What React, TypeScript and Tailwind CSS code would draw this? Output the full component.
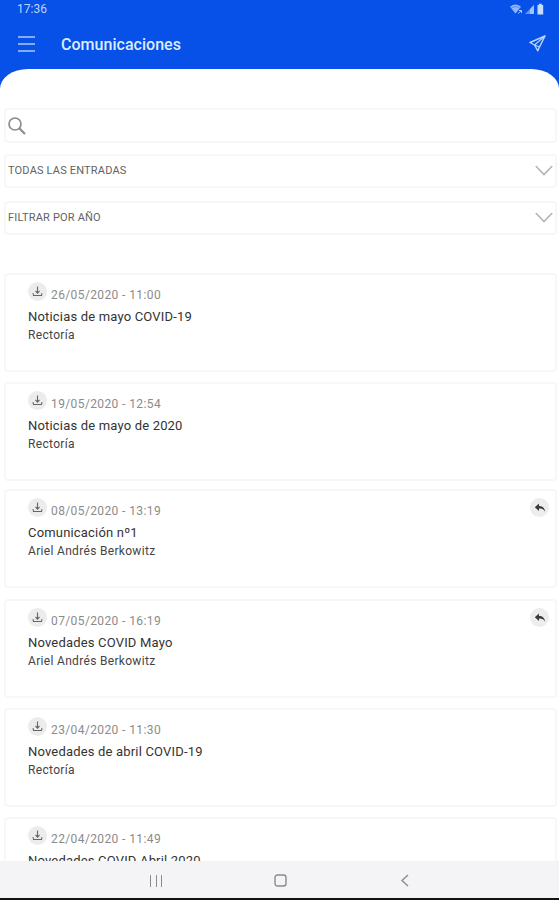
import React from 'react';

type Entry = { date: string; title: string; author?: string; reply?: boolean; gap: string };

const entries: Entry[] = [
  { date: '26/05/2020 - 11:00', title: 'Noticias de mayo COVID-19', author: 'Rectoría', gap: 'mb-[10px]' },
  { date: '19/05/2020 - 12:54', title: 'Noticias de mayo de 2020', author: 'Rectoría', gap: 'mb-[8px]' },
  { date: '08/05/2020 - 13:19', title: 'Comunicación nº1', author: 'Ariel Andrés Berkowitz', reply: true, gap: 'mb-[11px]' },
  { date: '07/05/2020 - 16:19', title: 'Novedades COVID Mayo', author: 'Ariel Andrés Berkowitz', reply: true, gap: 'mb-[10px]' },
  { date: '23/04/2020 - 11:30', title: 'Novedades de abril COVID-19', author: 'Rectoría', gap: 'mb-[10px]' },
  { date: '22/04/2020 - 11:49', title: 'Novedades COVID Abril 2020', gap: '' },
];

function StatusIcons() {
  return (
    <svg width="36" height="12" viewBox="0 0 36 12" fill="#c5dcfb">
      <path d="M0 3.8Q5.5-.6 11 3.8L5.5 10.5Z" opacity=".72" />
      <path d="M1.3 5.2Q5.5 2 9.7 5.2" stroke="#0750e8" strokeWidth=".4" fill="none" />
      <path d="M8 10.5L11.5 7.5M9 7.5h2.5V10" stroke="#a6c7fa" fill="none" />
      <path d="M15 11L24 2v9Z" opacity=".5" />
      <path d="M20 11V6L24 2v9Z" opacity=".6" />
      <path d="M27.5 2h1.3V.8h3V2h1.4v9.5h-5.7Z" />
    </svg>
  );
}

function Chevron() {
  return (
    <svg className="-mt-[2px]" width="18" height="11" viewBox="0 0 18 11" fill="none" stroke="#b4b4b4" strokeWidth="1.6">
      <path d="M.8 1L9 9.5 17.2 1" />
    </svg>
  );
}

function Download() {
  return (
    <span className="flex size-[19px] shrink-0 items-center justify-center rounded-full bg-[#ececec]">
      <svg width="11" height="11" viewBox="0 0 11 11" fill="none" stroke="#666" strokeWidth="1.1">
        <path d="M5.5 .5V7M3.5 5L5.5 7.1 7.5 5M1 7.2L1.5 9.5h8L10 7.2" />
      </svg>
    </span>
  );
}

function Reply() {
  return (
    <span className="flex size-[19px] items-center justify-center rounded-full bg-[#ededed]">
      <svg width="12" height="12" viewBox="0 0 12 12" fill="#3b3b3b">
        <path d="M.8 5.2L5 1.5V4C8.5 4 10.7 5.8 11 9.7 9.5 7.1 7.8 6.5 5 6.5V9Z" />
      </svg>
    </span>
  );
}

function Select({ label }: { label: string }) {
  return (
    <div className="flex h-[34px] items-center justify-between rounded-[4px] border-2 border-[#f7f7f7] bg-white pl-[2px] pr-[2px]">
      <span className="text-[11px] leading-[14px] tracking-[0.18px] text-[#626262]">{label}</span>
      <Chevron />
    </div>
  );
}

function Card({ entry }: { entry: Entry }) {
  return (
    <article className={`flex h-[99px] shrink-0 items-start justify-between rounded-[4px] border-2 border-[#f7f7f7] bg-white pl-[22px] pr-[6px] pt-[7px] ${entry.gap}`}>
      <div>
        <div className="flex h-[22px] items-start gap-[4px]">
          <Download />
          <time className="pt-[5px] text-[12px] leading-[16px] tracking-[0.39px] text-[#8b8b8b]">{entry.date}</time>
        </div>
        <h2 className="mt-[4px] whitespace-nowrap text-[13px] leading-[18px] tracking-[0.18px] text-[#333]">{entry.title}</h2>
        {entry.author && <p className="text-[12px] leading-[18px] tracking-[0.32px] text-[#444]">{entry.author}</p>}
      </div>
      {entry.reply && <Reply />}
    </article>
  );
}

export default function App() {
  return (
    <div className="flex h-[900px] w-[559px] flex-col overflow-hidden bg-[#0750e8] font-['Roboto',sans-serif]">
      <header className="h-[69px] shrink-0 text-[#dcecff]">
        <div className="flex h-[18px] items-center justify-between pl-[17px] pr-[13px]">
          <span className="text-[12px] leading-[14px] text-[#b9d5ff]">17:36</span>
          <StatusIcons />
        </div>
        <div className="flex h-[51px] items-center pl-[18px] pr-[13px]">
          <div className="flex w-[17px] flex-col gap-[5px]">
            <span className="h-[2px] bg-[#82acf6]" />
            <span className="h-[2px] bg-[#82acf6]" />
            <span className="h-[2px] bg-[#82acf6]" />
          </div>
          <h1 className="ml-[26px] mt-[2px] text-[16px] font-medium leading-[20px] tracking-[0.03px]">Comunicaciones</h1>
          <svg className="ml-auto" width="17" height="17" viewBox="0 0 17 17" fill="none" stroke="#b9d6ff" strokeWidth="1.4" strokeLinejoin="round">
            <path d="M16 1L1 7.5 5.5 10 8.8 15.8 10.5 12Z" />
            <path d="M16 1L5.5 10 10.5 12" strokeWidth="1.1" />
          </svg>
        </div>
      </header>
      <main className="flex min-h-0 flex-1 flex-col overflow-hidden rounded-t-[28px_20px] bg-white">
        <div className="flex shrink-0 flex-col pl-[4px] pr-[2px] pt-[39px]">
          <div className="mb-[11px] flex h-[35px] items-center rounded-[4px] border-2 border-[#f7f7f7] pl-[2px]">
            <svg width="18" height="18" viewBox="0 0 18 18" fill="none" stroke="#8c8c8c" strokeWidth="1.7">
              <circle cx="7" cy="7" r="6" />
              <path d="M11.2 11.2L17 17" strokeWidth="2.2" />
            </svg>
          </div>
          <div className="mb-[13px]"><Select label="TODAS LAS ENTRADAS" /></div>
          <Select label="FILTRAR POR AÑO" />
        </div>
        <section className="mt-[38px] flex min-h-0 flex-1 flex-col overflow-hidden pl-[4px] pr-[2px]">
          {entries.map((entry) => <Card key={entry.date} entry={entry} />)}
        </section>
      </main>
      <nav className="flex h-[39px] shrink-0 items-center border-b-2 border-[#111] bg-[#f4f4f6] pl-[150px] pt-[2px]">
        <span className="flex h-[12px] w-[12px] justify-between">
          <span className="w-px bg-[#8b8b8d]" />
          <span className="w-px bg-[#8b8b8d]" />
          <span className="w-px bg-[#8b8b8d]" />
        </span>
        <svg className="ml-[112px]" width="13" height="13" viewBox="0 0 13 13" fill="none" stroke="#8b8b8d" strokeWidth="1.4">
          <rect x="1" y="1" width="11" height="11" rx="2.5" />
        </svg>
        <svg className="ml-[113px]" width="9" height="13" viewBox="0 0 9 13" fill="none" stroke="#8b8b8d" strokeWidth="1.4">
          <path d="M8 1L2 6.5l6 5.5" />
        </svg>
      </nav>
    </div>
  );
}
